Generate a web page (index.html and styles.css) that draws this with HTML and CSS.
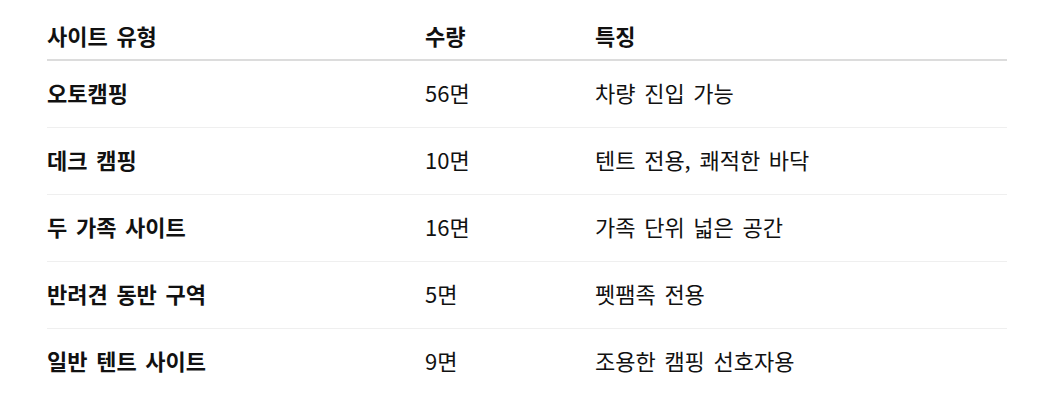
FILE: index.html
```html
<!DOCTYPE html>
<html lang="ko">
<head>
<meta charset="utf-8">
<link rel="stylesheet" href="styles.css">
</head>
<body>
<div class="wrap">
<table class="sites">
<thead>
<tr><th class="c1">사이트 유형</th><th class="c2">수량</th><th class="c3">특징</th></tr>
</thead>
<tbody>
<tr><td class="name">오토캠핑</td><td>56면</td><td>차량 진입 가능</td></tr>
<tr><td class="name">데크 캠핑</td><td>10면</td><td>텐트 전용, 쾌적한 바닥</td></tr>
<tr><td class="name">두 가족 사이트</td><td>16면</td><td>가족 단위 넓은 공간</td></tr>
<tr><td class="name">반려견 동반 구역</td><td>5면</td><td>펫팸족 전용</td></tr>
<tr><td class="name">일반 텐트 사이트</td><td>9면</td><td>조용한 캠핑 선호자용</td></tr>
</tbody>
</table>
</div>
</body>
</html>
```

FILE: styles.css
```css
html, body {
  margin: 0;
  padding: 0;
  background: #fff;
}
body {
  font-family: "Noto Sans CJK SC", "Noto Sans CJK KR", "Noto Sans", sans-serif;
  color: #111;
}
.wrap {
  padding: 13px 42px 0 47px;
}
.sites {
  width: 960px;
  border-collapse: collapse;
  font-size: 22px;
  line-height: 27px;
  word-spacing: 2.5px;
}
.sites th, .sites td {
  text-align: left;
  padding: 0;
  vertical-align: middle;
}
.sites th {
  font-weight: 700;
  height: 44px;
  padding-bottom: 2px;
  border-bottom: 2px solid #dcdcdc;
}
.sites td {
  height: 63px;
  padding-bottom: 3px;
  border-bottom: 1px solid #efefef;
  font-weight: 400;
}
.sites tbody tr:last-child td {
  border-bottom: none;
}
.sites td.name {
  font-weight: 700;
}
.c1 { width: 378px; }
.c2 { width: 170px; }
```
